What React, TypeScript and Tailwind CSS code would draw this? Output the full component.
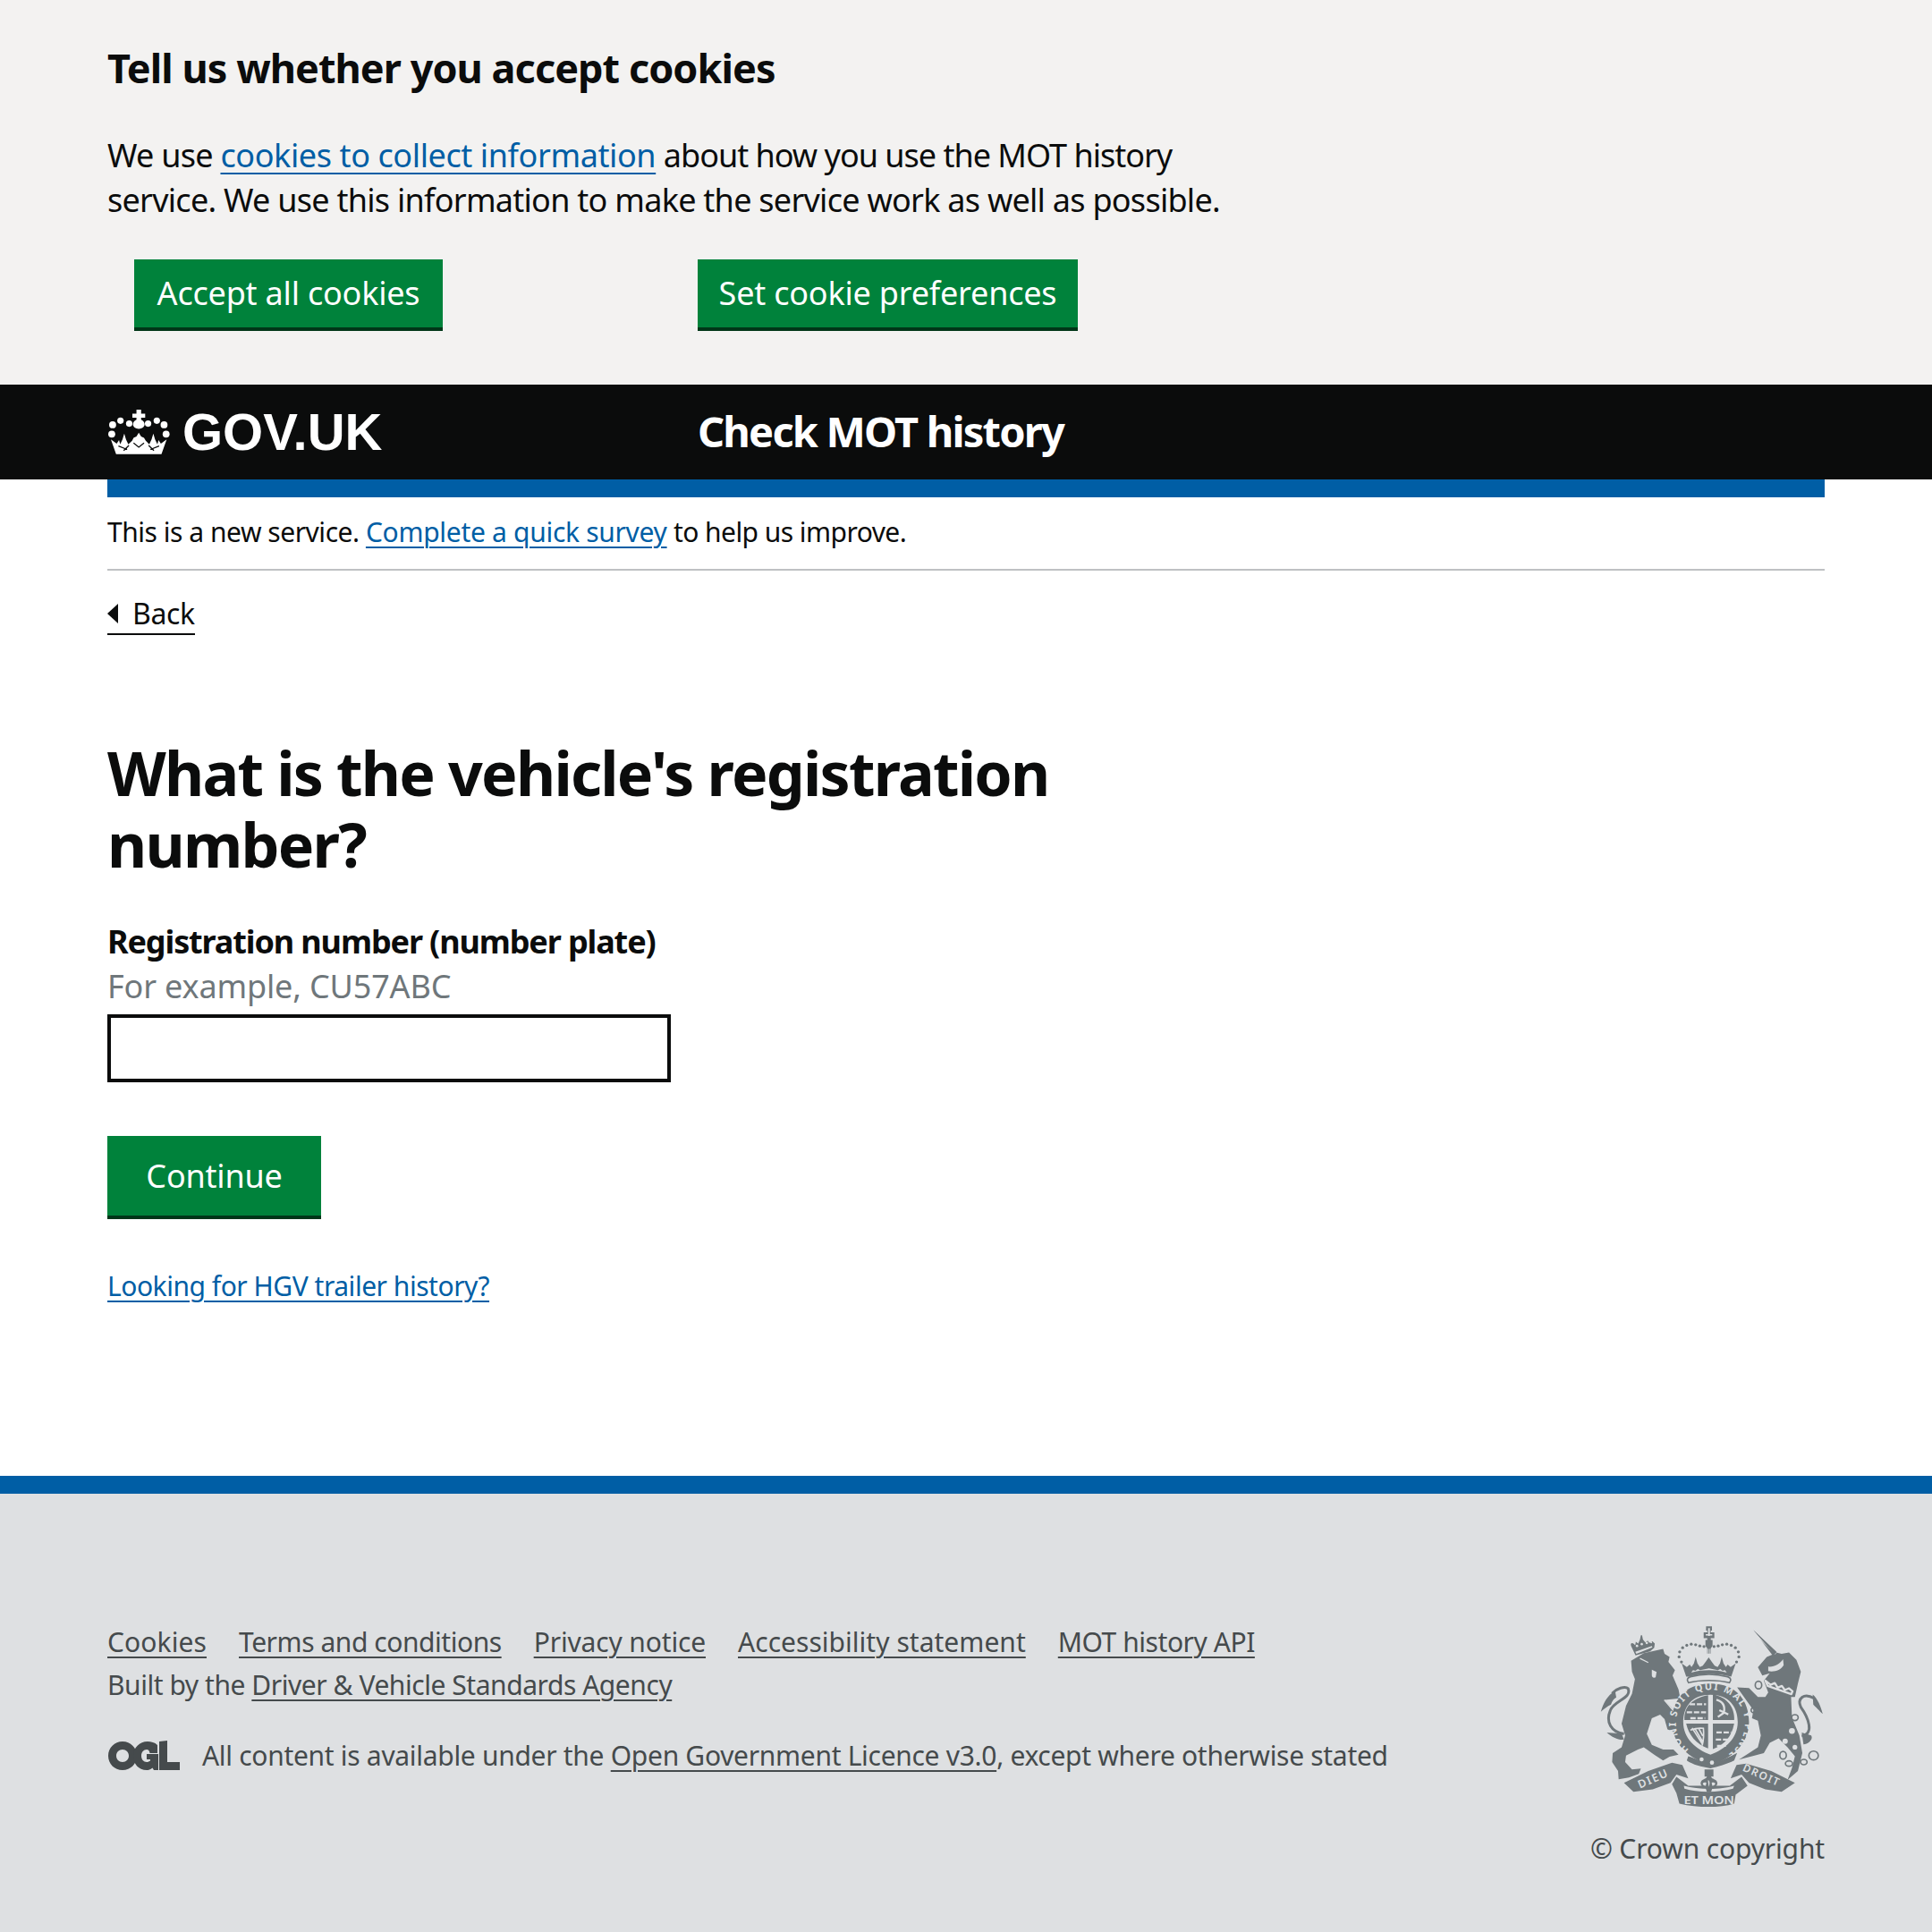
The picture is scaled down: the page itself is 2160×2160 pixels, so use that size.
const font = "[font-family:'Noto_Sans','Open_Sans',sans-serif]";

function Crown({ className }: { className?: string }) {
  return (
    <svg viewBox="60 70 215 160" className={className} fill="#fff">
      <path d="M160 73h16v14h14v14h-14v7c8 4 12 10 12 16 0 8-9 15-20 15s-20-7-20-15c0-6 4-12 12-16v-7h-14V87h14z" />
      <circle cx="78" cy="125" r="12" />
      <circle cx="75" cy="157" r="12" />
      <circle cx="105" cy="111" r="11" />
      <circle cx="135" cy="121" r="11" />
      <circle cx="200" cy="121" r="11" />
      <circle cx="230" cy="111" r="11" />
      <circle cx="255" cy="125" r="12" />
      <circle cx="262" cy="157" r="12" />
      <path d="M90 226L72 175l20 15 8-12 4 14 8-17 6-20 6 20 8 17 13-12 5-10 10-5 8-13 8 13 10 5 6 10 12 12 8-17 6-20 6 20 8 17 4-14 8 12 20-15-18 51z" />
      <g stroke="#0b0c0c" strokeWidth="4" fill="none">
        <path d="M98 198l30 12M134 196l-18 18M150 188l18 14 18-14M202 196l18 18M238 198l-30 12" />
      </g>
    </svg>
  );
}

function Ogl({ className }: { className?: string }) {
  return (
    <svg viewBox="0 0 82 34" className={className} fill="#454a4c">
      <path fillRule="evenodd" d="M17 1c9 0 16 7 16 16s-7 16-16 16S1 26 1 17 8 1 17 1zm0 9c-4 0-7 3-7 7s3 7 7 7 7-3 7-7-3-7-7-7z" />
      <path d="M45 1c4 0 8 1 11 4v9h-8.500c-.5-2.500-1.500-4-3.500-4-3.500 0-6 3-6 7s2.500 7 6 7c1.500 0 3-.6 4-1.500V21h-4v-6h13v18h-5l-1.500-2.500C48 32.500 46 33 44 33c-9 0-15-7-15-16S36 1 45 1z" />
      <path d="M58 1l9-1v24h14v9H58z" />
    </svg>
  );
}

function Crest({ className }: { className?: string }) {
  const grey = "#6f777b";
  const bg = "#dee0e2";
  const pearls = [
    [362, 182], [354, 165], [356, 148], [366, 134], [380, 126], [395, 122], [410, 124], [424, 128], [438, 130],
    [472, 130], [486, 128], [500, 124], [515, 122], [530, 126], [544, 134], [554, 148], [556, 165], [548, 182],
  ];
  const rings = [
    [622, 260, 11, 13], [610, 345, 13, 10], [745, 370, 11, 10], [705, 497, 11, 13], [725, 525, 12, 9], [775, 520, 11, 9], [808, 498, 16, 15],
  ];
  return (
    <svg viewBox="85 55 760 625" className={className}>
      {/* lion */}
      <path fill={grey} d="M192 178L235 152 300 138 305 155 322 165 318 182 340 210 332 228 352 275 358 305 305 310 345 355 365 405 345 420 315 410 305 375 290 360 262 372 245 425 262 462 300 478 335 478 352 495 322 502 300 515 270 495 235 470 215 478 175 498 172 520 195 545 225 542 218 560 185 572 150 578 148 550 128 520 130 490 160 470 172 430 160 390 175 330 195 290 205 240 195 215z" />
      <path fill={bg} d="M262 208l16 8-3 18c-8 4-14-2-13-10z" />
      <path fill="none" stroke={bg} strokeWidth="4" d="M222 170l28 14M304 310l56 66" />
      <path fill="none" stroke={grey} strokeWidth="9" d="M168 425C125 418 105 385 122 345 135 312 195 305 182 272 172 262 142 272 128 288" />
      <path fill={grey} d="M90 350c8-28 22-56 48-70l4 22c-8 4-14 12-18 24-12 6-22 14-34 24zM110 420l50 4 8 20c-20 2-40-8-58-24z" />
      {/* lion crown */}
      <path fill={grey} d="M207 160l-15-32c-3-8 2-12 8-8l6 6 2-12 8 6 6-14 3-14 4 0 3 14 8 10 8-6 6 8 10-6 8 8-2 14-14 12z" />
      <g fill={bg}>
        <circle cx="212" cy="128" r="4" />
        <circle cx="228" cy="122" r="4" />
        <circle cx="245" cy="118" r="4" />
        <circle cx="260" cy="116" r="3" />
        <path d="M206 148l56-20 2 5-54 22z" />
      </g>
      {/* royal crown */}
      <path fill={grey} d="M445 62h20v14h-4v6h12v20h-12v6h6v20l-6 8v18h-12v-18l-6-8v-20h6v-6h-12V82h12v-6h-4z" />
      <g fill={bg}>
        <path d="M452 68h6v26h-6zM444 88h22v5h-22z" />
        <path d="M451 138h3v28h-3zM457 138h3v28h-3z" />
      </g>
      {pearls.map(([x, y]) => (
        <circle key={`${x}-${y}`} cx={x} cy={y} r="5" fill={grey} />
      ))}
      <path fill={grey} d="M378 232l-15-45 17 12 10-8 6 8 8-12 6-22 6 22 8 12 10-4 10-14 10-14 10 14 10 14 10 4 8-12 6-22 6 22 8 12 6-8 10 8 17-12-15 45c-35-12-105-12-140 0z" />
      <path fill={bg} d="M395 218c20-6 40-8 60-8s40 2 60 8l-6-8-8 2-8-6-8 4-30-6-30 6-8-4-8 6-8-2z" />
      <path fill="none" stroke={grey} strokeWidth="5" d="M386 252c-8-10-4-16 6-20 40-10 86-10 126 0 10 4 14 10 6 20-40-10-98-10-138 0z" />
      {/* shield ring */}
      <path fill={grey} fillRule="evenodd" d="M460 255c90 0 130 60 130 130 0 75-60 125-130 145-70-20-130-70-130-145 0-70 40-130 130-130zm0 38c-62 0-92 40-92 92 0 55 42 92 92 110 50-18 92-55 92-110 0-52-30-92-92-92z" />
      <path id="mottoRing" fill="none" d="M388 478C352 452 342 420 344 385 346 325 390 276 460 276S576 325 576 390C576 430 555 470 525 490" />
      <text fill={bg} fontFamily="'Noto Sans', sans-serif" fontWeight="700" fontSize="33">
        <textPath href="#mottoRing" startOffset="0" textLength="590" lengthAdjust="spacing">HONI SOIT QUI MAL Y PENSE</textPath>
      </text>
      {/* shield quarters */}
      <path fill={grey} d="M372 378c-2-38 18-72 80-84v84z" />
      <path fill={grey} d="M468 292c50 8 74 46 72 86h-72z" />
      <path fill={grey} d="M378 390h74v84c-40-14-66-46-74-84z" />
      <path fill={grey} d="M468 390h72c-8 42-32 72-72 86z" />
      <g fill="none" stroke={bg} strokeWidth="7" strokeDasharray="18 6">
        <path d="M390 325h55M380 352h65M392 372h50" />
        <path d="M480 420h50M478 444h45M482 465h30" />
      </g>
      <path fill="none" stroke={bg} strokeWidth="7" d="M480 310c22 6 30 22 25 44l-20 14M490 345l30 14" />
      <path fill="none" stroke={bg} strokeWidth="5" d="M398 405l36 56M392 412c16-6 28-8 44-6 2 20 2 36-4 58M408 408l26 44M420 406l14 26" />
      {/* shield foot */}
      <path fill={grey} d="M385 500c25 8 55 22 75 25 25-4 60-20 90-36l-10 26c-24 12-56 22-80 26-30-4-60-12-80-26z" />
      <circle cx="430" cy="511" r="7" fill={bg} />
      <circle cx="465" cy="522" r="7" fill={bg} />
      {/* unicorn */}
      <path fill={grey} d="M605 75L682 150 700 155 725 150 750 175 765 215 755 255 745 300 732 300 735 370 760 430 770 490 755 550 720 580 735 540 745 500 720 470 690 440 660 455 640 490 600 500 556 512 590 490 620 470 630 430 620 380 600 372 605 345 580 310 550 268 590 270 620 300 645 300 655 285 640 245 660 220 635 228 620 200 650 165 668 158z" />
      <path fill="none" stroke={bg} strokeWidth="5" d="M600 75L680 155" />
      <path fill={grey} d="M605 75l78 73-7 10z" />
      <path fill="none" stroke={bg} strokeWidth="7" strokeLinejoin="round" d="M645 245l18 14 14-6 10 16 14-6 10 14 14-6 12 10 -4 10-80-28z" />
      <path fill={bg} d="M655 198c20 2 40-10 50-25l2 20c-10 16-30 24-52 20z" />
      <circle cx="735" cy="415" r="10" fill={bg} />
      <circle cx="712" cy="450" r="9" fill={bg} />
      <circle cx="745" cy="470" r="8" fill={bg} />
      <path fill="none" stroke={grey} strokeWidth="9" d="M768 432C812 425 790 370 765 335 752 305 775 285 810 305" />
      <path fill={grey} d="M805 292c14 10 26 36 34 66-14-14-22-22-32-32zM768 420l32 10c8 14-10 30-26 30z" />
      {rings.map(([x, y, rx, ry]) => (
        <ellipse key={`${x}-${y}`} cx={x} cy={y} rx={rx} ry={ry} fill="none" stroke={grey} strokeWidth="5" />
      ))}
      {/* motto ribbon */}
      <path fill={grey} d="M168 590L250 550 330 522 365 530 385 575 345 562 325 590 265 612 200 620z" />
      <path fill={grey} d="M745 590L665 550 580 525 548 530 528 575 565 562 590 590 645 612 700 620z" />
      <path fill={grey} d="M330 595l15-25 40 30h140l40-30 20 30-40 30-5 30c-50 15-120 15-185 0l-10-35z" />
      <path fill={bg} d="M370 600c50 14 125 14 170 0l-4 10c-50 14-120 14-164 0z" />
      {/* fleur */}
      <path fill={grey} d="M440 545h30v24l-8 0c2 8 10 6 18 14 8 10 0 24-12 20l-6 18-7 0-7 0-6-18c-12 4-20-10-12-20 8-8 16-6 18-14h-8z" />
      <path fill={bg} d="M452 580c6 4 6 10 3 24-3-14-3-20-3-24zM434 592c4-4 8-4 12-2l-2 10c-4 1-10-2-10-8zM476 592c-4-4-8-4-12-2l2 10c4 1 10-2 10-8z" />
      <g fill={bg} fontFamily="'Noto Sans', sans-serif" fontWeight="600">
        <text x="455" y="661" textAnchor="middle" fontSize="40" textLength="170" lengthAdjust="spacingAndGlyphs">ET MON</text>
        <text x="222" y="610" fontSize="38" textLength="105" transform="rotate(-24 222 610)">DIEU</text>
        <text x="566" y="548" fontSize="36" textLength="130" transform="rotate(24 566 548)">DROIT</text>
      </g>
    </svg>
  );
}

export default function App() {
  return (
    <div className={`${font} min-h-[2160px] bg-white text-[#0b0c0c]`}>
      {/* Cookie banner */}
      <div className="h-[430px] bg-[#f3f2f1] px-[120px] pt-[48px]">
        <h2 className="text-[45px] leading-[56px] font-bold tracking-[-0.95px]">Tell us whether you accept cookies</h2>
        <p className="mt-[45px] max-w-[1300px] text-[36px] leading-[50px] tracking-[-0.73px]">
          We use <a className="tracking-[-0.4px] text-[#005ea5] underline underline-offset-[6px] decoration-2">cookies to collect information</a> <span className="tracking-[-1px]">about how you use the MOT history</span>
          <br />
          service. We use this information to make the service work as well as possible.
        </p>
        <div className="mt-[41px] flex pl-[30px]">
          <button className="flex h-[80px] w-[345px] items-center justify-center border-b-[4px] border-[#003618] bg-[#00823b] text-[36px] tracking-[-0.2px] text-white">Accept all cookies</button>
          <button className="ml-[285px] flex h-[80px] w-[425px] items-center justify-center border-b-[4px] border-[#003618] bg-[#00823b] text-[36px] tracking-[-0.2px] text-white">Set cookie preferences</button>
        </div>
      </div>

      {/* Header */}
      <header className="flex h-[106px] items-center bg-[#0b0c0c] pl-[120px] text-white">
        <div className="flex w-[660px] items-center">
          <Crown className="h-[52px] w-[70px]" />
          <span className="ml-[14px] text-[58px] leading-none font-bold [font-family:'Liberation_Sans',Arial,sans-serif]">GOV.UK</span>
        </div>
        <span className="pb-[2px] text-[47px] font-bold tracking-[-1.8px]">Check MOT history</span>
      </header>

      <main className="px-[120px]">
        <div className="h-[20px] bg-[#005ea5]" />
        <div className="flex h-[82px] items-center border-b-2 border-[#bfc1c3] pb-[3px] text-[30px] tracking-[-0.47px]">
          <span>
            This is a new service. <a className="tracking-[-0.3px] text-[#005ea5] underline underline-offset-[5px] decoration-2">Complete a quick survey</a> <span className="tracking-[-0.55px]">to help us improve.</span>
          </span>
        </div>
        <div className="mt-[28px] flex">
          <a className="flex h-[44px] items-center border-b-2 border-[#0b0c0c] pb-[2px] text-[32px] leading-[40px] tracking-[-0.4px]">
            <span className="mr-[16px] h-0 w-0 border-y-[11px] border-r-[12px] border-y-transparent border-r-[#0b0c0c]" />
            Back
          </a>
        </div>

        <h1 className="mt-[114px] text-[68px] leading-[80px] font-bold tracking-[-1.75px]">
          What is the vehicle's registration
          <br />
          number?
        </h1>

        <label className="mt-[44px] block text-[36px] leading-[50px] font-bold tracking-[-1.12px]">Registration number (number plate)</label>
        <div className="text-[36px] leading-[50px] tracking-[-0.15px] text-[#6f777b]">For example, CU57ABC</div>
        <input type="text" className="mt-[6px] block h-[76px] w-[630px] border-[4px] border-[#0b0c0c] bg-white" />

        <button className="mt-[60px] flex h-[93px] w-[239px] items-center justify-center border-b-[4px] border-[#003618] bg-[#00823b] text-[36px] tracking-[-0.2px] text-white">Continue</button>

        <a className="mt-[53px] block text-[30px] leading-[44px] tracking-[-0.47px] text-[#005ea5] underline underline-offset-[5px] decoration-2">Looking for HGV trailer history?</a>
      </main>

      {/* Footer */}
      <footer className="mt-[190px] h-[510px] border-t-[20px] border-[#005ea5] bg-[#dee0e2] px-[120px] pt-[141px] text-[30px] tracking-[-0.45px] text-[#454a4c]">
        <div className="flex justify-between">
          <div>
            <ul className="flex h-[49px] items-center gap-[36px] underline underline-offset-[5px] decoration-2">
              <li className="tracking-[0.1px]">Cookies</li>
              <li>Terms and conditions</li>
              <li className="tracking-[-0.15px]">Privacy notice</li>
              <li className="tracking-[0.03px]">Accessibility statement</li>
              <li>MOT history API</li>
            </ul>
            <div className="h-[48px] leading-[48px]">
              Built by the <a className="underline underline-offset-[5px] decoration-2">Driver &amp; Vehicle Standards Agency</a>
            </div>
            <div className="mt-[32px] flex items-center">
              <Ogl className="h-[34px] w-[82px]" />
              <span className="ml-[24px] tracking-[-0.3px]">
                All content is available under the <a className="underline underline-offset-[5px] decoration-2">Open Government Licence v3.0</a>, except where otherwise stated
              </span>
            </div>
          </div>
          <div className="flex flex-col items-end">
            <Crest className="mt-[5px] h-[207px] w-[252px]" />
            <div className="mt-[21px] whitespace-nowrap tracking-[-0.15px]">© Crown copyright</div>
          </div>
        </div>
      </footer>
    </div>
  );
}
